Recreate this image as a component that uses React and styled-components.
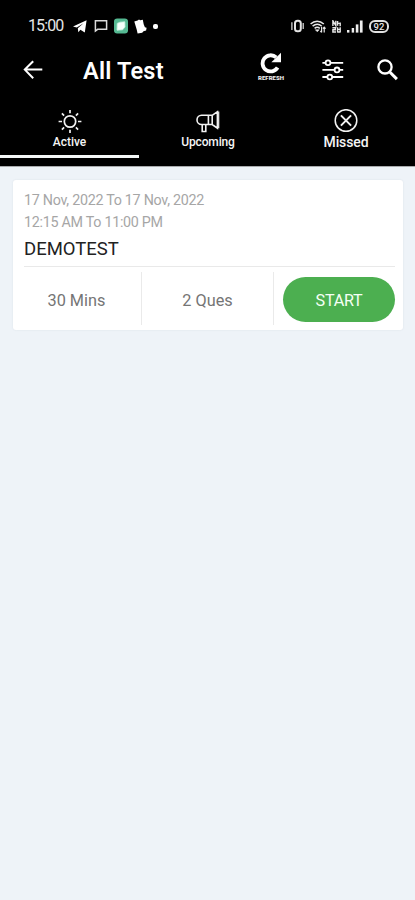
import React from 'react';
import styled, { createGlobalStyle } from 'styled-components';

const TABS = [
  { id: 'active', label: 'Active', size: 12, spacing: -0.05 },
  { id: 'upcoming', label: 'Upcoming', size: 12, spacing: -0.15 },
  { id: 'missed', label: 'Missed', size: 14, spacing: -0.1 },
];

const TelegramIcon = () => (
  <svg width="14" height="13" viewBox="0 0 14 13">
    <path d="M0 6.6 13.6.2 11.8 12.6 7.4 9.8 5.3 12.2 4.8 8.2 10.5 3.2 3.8 7.6Z" fill="#fff" />
  </svg>
);

const MessageIcon = () => (
  <svg width="14" height="14" viewBox="0 0 14 14" fill="none" stroke="#dcdcdc" strokeWidth="1.5">
    <path d="M1.4 12V1.8h11.2v8.5H3.6Z" />
  </svg>
);

const GreenAppIcon = () => (
  <svg width="14" height="16" viewBox="0 0 14 16">
    <rect y=".4" width="14" height="15" rx="3.2" fill="#55b992" />
    <path d="M3.2 5.4 6 4.2l4.8-.4.2 5.2-2.4 2.8-5.6.4Z" fill="#f4fffa" stroke="#c8f0e0" strokeWidth=".8" />
  </svg>
);

const CardsIcon = () => (
  <svg width="13" height="15" viewBox="0 0 13 15">
    <path d="M.3 2.4 3.6 1.6 5 .4l1.2.9L8.8.8l.9 4.4 1.2 3 1.7.6-.5 2.8-2.6.6-1.3 1.6-4.6.8-.9-4.2Z" fill="#fff" />
  </svg>
);

const VibrateIcon = () => (
  <svg width="13" height="14" viewBox="0 0 13 14" fill="none" stroke="#e4e4e4">
    <rect x="4" y="1.7" width="5.8" height="10.6" rx="2.6" strokeWidth="2" />
    <path d="M.9 3.2v7.8M12.2 4v6" strokeWidth="1.2" />
  </svg>
);

const WifiIcon = () => (
  <svg width="16" height="13" viewBox="0 0 16 13" fill="none" stroke="#e8e8e8" strokeWidth="1.5">
    <path d="M.6 4C4.5.4 9.8.4 13.8 4M2.6 6.2c2.9-2.4 6.4-2.4 9.2 0M4.6 8.4c1.6-1.4 3.6-1.4 5.2 0" />
    <path d="m5.4 9.8 1.9 2 1.9-2Z" fill="#e8e8e8" strokeWidth=".6" />
    <path d="M11.6 7v5.4M14.2 7v5.4M10.4 11l1.2 1.4M13 8.6l1.2-1.4 1.4 1.4" strokeWidth="1.2" />
  </svg>
);

const NetworkIcon = () => (
  <svg width="9" height="13" viewBox="0 0 9 13" fill="none" stroke="#e8e8e8" strokeWidth="1.4">
    <path d="M.9 6V.8l2.9 4.8V.8M5.6 1v4.8M5.6 3.4h2.6M8.2 2.6v3.6M.4 7.7h3v2H.9v2.3H4M5.6 7.2v5.2M8.2 7.2v5.2M5.4 9.4h3M5.4 12h2.8" />
  </svg>
);

const SignalIcon = () => (
  <svg width="16" height="13" viewBox="0 0 16 13" fill="#ededed">
    <rect y="10" width="2.4" height="2.6" />
    <rect x="4.7" y="8" width="2.4" height="4.6" />
    <rect x="8.8" y="4.4" width="2.6" height="8.2" />
    <rect x="12.9" y=".5" width="2.7" height="12.1" />
  </svg>
);

const BackIcon = () => (
  <svg width="20" height="20" viewBox="0 0 20 20" fill="none" stroke="#fff" strokeWidth="2">
    <path d="M19.3 9.6H2M10.2 1.2 1.8 9.6l8.4 8.6" />
  </svg>
);

const RefreshIcon = () => (
  <svg width="22" height="22" viewBox="0 0 22 22" fill="none">
    <path d="M17.6 15.6A8.1 8.1 0 1 1 16.2 5.4" stroke="#fff" strokeWidth="3.8" />
    <path d="M21 .8v9.4h-9.6Z" fill="#fff" />
  </svg>
);

const FilterIcon = () => (
  <svg width="22" height="22" viewBox="0 0 22 22" fill="none" stroke="#fff" strokeWidth="1.8">
    <path d="M.4 3.8h3.4M8.2 3.8h13M.4 10.9h12.4M17.2 10.9h4M.4 18h5.2M10 18h11.2" />
    <circle cx="6" cy="3.8" r="2.4" />
    <circle cx="15" cy="10.9" r="2.4" />
    <circle cx="7.8" cy="18" r="2.4" />
  </svg>
);

const SearchIcon = () => (
  <svg width="22" height="22" viewBox="0 0 22 22" fill="none" stroke="#fff">
    <circle cx="8" cy="7.9" r="6.6" strokeWidth="2.3" />
    <path d="m13 13.2 6.9 6.9" strokeWidth="3" />
  </svg>
);

const SunIcon = () => (
  <svg width="24" height="24" viewBox="0 0 24 24" fill="none" stroke="#f2f2f2" strokeWidth="1.7">
    <circle cx="12" cy="12.5" r="5.7" />
    <path d="M12 1v3.2M12 20.8V24M.6 12.5H4M20 12.5h3.4M3.9 4.4l2.2 2.2M17.9 18.4l2.2 2.2M3.9 20.6l2.2-2.2M17.9 6.6l2.2-2.2" />
  </svg>
);

const MegaphoneIcon = () => (
  <svg width="24" height="24" viewBox="0 0 24 24" fill="none" stroke="#f2f2f2" strokeWidth="1.6">
    <path d="M12.4 6.3H5.6a4.6 4.6 0 0 0 0 9.2h6.8ZM12.4 6.3h3.8v9.2h-3.8M16.2 6.3l5.2-3.6v16.4l-5.2-3.6M6.2 15.5v7h3.6v-7" />
    <path d="M22.7 2.6v16.6" strokeWidth="1.2" />
  </svg>
);

const MissedIcon = () => (
  <svg width="24" height="24" viewBox="0 0 24 24" fill="none" stroke="#f2f2f2">
    <circle cx="12" cy="11.5" r="10.8" strokeWidth="1.5" />
    <path d="m6.9 6.4 10.2 10.2M17.1 6.4 6.9 16.6" strokeWidth="2" />
  </svg>
);

const TAB_ICONS = { active: SunIcon, upcoming: MegaphoneIcon, missed: MissedIcon };

const App = () => {
  return (
    <Screen>
      <GlobalStyles />
      <Header>
        <StatusBar>
          <StatusGroup $gap={6.3}>
            <Clock>15:00</Clock>
            <TelegramIcon />
            <MessageIcon />
            <GreenAppIcon />
            <CardsIcon />
            <Dot />
          </StatusGroup>
          <StatusGroup $gap={6}>
            <VibrateIcon />
            <WifiIcon />
            <NetworkIcon />
            <SignalIcon />
            <Battery>92</Battery>
          </StatusGroup>
        </StatusBar>
        <Toolbar>
          <BackIcon />
          <Title>All Test</Title>
          <Actions>
            <Refresh>
              <RefreshIcon />
              <RefreshLabel>REFRESH</RefreshLabel>
            </Refresh>
            <FilterIcon />
            <SearchIcon />
          </Actions>
        </Toolbar>
        <Tabs>
          {TABS.map(({ id, label, size, spacing }) => {
            const Icon = TAB_ICONS[id];
            return (
              <Tab key={id} $active={id === 'active'}>
                <Icon />
                <TabLabel $size={size} $spacing={spacing}>
                  {label}
                </TabLabel>
              </Tab>
            );
          })}
        </Tabs>
      </Header>
      <Content>
        <Card>
          <Schedule $spacing={-0.28}>17 Nov, 2022 To 17 Nov, 2022</Schedule>
          <Schedule $spacing={-0.28}>12:15 AM To 11:00 PM</Schedule>
          <TestName>DEMOTEST</TestName>
          <Details>
            <Detail>30 Mins</Detail>
            <Detail>2 Ques</Detail>
            <StartButton>START</StartButton>
          </Details>
        </Card>
      </Content>
    </Screen>
  );
};

const GlobalStyles = createGlobalStyle`
  *, *::before, *::after {
    box-sizing: border-box;
  }

  body {
    margin: 0;
    background: #eef3f8;
    font-family: Roboto, "Liberation Sans", sans-serif;
  }

  svg {
    display: block;
    flex-shrink: 0;
  }
`;

const Screen = styled.div`
  width: 415px;
  height: 900px;
  overflow: hidden;
  background: #eef3f8;
`;

const Header = styled.header`
  height: 167px;
  background: #000;
  border-bottom: 1px solid #a9abad;
`;

const StatusBar = styled.div`
  display: flex;
  align-items: center;
  justify-content: space-between;
  height: 44px;
  padding: 8px 26px 0 28px;
`;

const StatusGroup = styled.div`
  display: flex;
  align-items: center;
  gap: ${(props) => props.$gap}px;
`;

const Clock = styled.span`
  width: 39px;
  color: #e6e6e6;
  font-size: 16px;
  letter-spacing: -0.9px;
  line-height: 18px;
`;

const Dot = styled.span`
  width: 5px;
  height: 5px;
  border-radius: 2px;
  background: #fff;
`;

const Battery = styled.span`
  width: 20px;
  height: 13px;
  border: 2px solid #e0e0e0;
  border-radius: 6px;
  color: #e6e6e6;
  font-size: 9.5px;
  font-weight: 500;
  line-height: 10px;
  text-align: center;
`;

const Toolbar = styled.div`
  display: flex;
  align-items: center;
  height: 52px;
  padding: 0 16px 0 23px;
`;

const Title = styled.h1`
  margin: 2px 0 0 40px;
  color: #fff;
  font-size: 23.5px;
  font-weight: 600;
  line-height: 28px;
  letter-spacing: 0.2px;
  white-space: nowrap;
`;

const Actions = styled.div`
  display: flex;
  align-items: center;
  gap: 33px;
  margin-left: auto;
`;

const Refresh = styled.div`
  display: flex;
  flex-direction: column;
  align-items: center;
  width: 28px;
  height: 32px;
  margin: -4px 4px 0 0;
`;

const RefreshLabel = styled.span`
  color: #eee;
  font-size: 6px;
  font-weight: 900;
  line-height: 7px;
`;

const Tabs = styled.nav`
  display: grid;
  grid-template-columns: 139px 138px 138px;
  height: 62px;
`;

const Tab = styled.div`
  display: flex;
  flex-direction: column;
  align-items: center;
  padding-top: 13px;
  border-bottom: 3px solid ${(props) => (props.$active ? '#f4f8f8' : 'transparent')};
`;

const TabLabel = styled.span`
  height: 16px;
  color: #f5f5f5;
  font-size: ${(props) => props.$size}px;
  font-weight: 500;
  letter-spacing: ${(props) => props.$spacing}px;
  line-height: 18px;
`;

const Content = styled.main`
  padding: 13px 12px 0 13px;
`;

const Card = styled.section`
  height: 150px;
  padding: 10px 8px 0 11px;
  border-radius: 3px;
  background: #fff;
  box-shadow: 0 0 2px rgba(90, 100, 110, 0.12);
`;

const Schedule = styled.p`
  margin: 0;
  color: #a6a6a6;
  font-size: 14.3px;
  letter-spacing: ${(props) => props.$spacing}px;
  line-height: 21.5px;
  white-space: nowrap;
`;

const TestName = styled.h2`
  height: 34px;
  margin: 0;
  padding-top: 4px;
  border-bottom: 1px solid #e9e9e9;
  color: #222;
  font-size: 18.5px;
  font-weight: 400;
  line-height: 24px;
`;

const Details = styled.div`
  display: grid;
  grid-template-columns: 118px 132px 1fr;
  align-items: center;
  padding-top: 5px;
`;

const Detail = styled.div`
  height: 53px;
  padding-right: 12px;
  border-right: 1px solid #eaeaea;
  color: #757575;
  font-size: 16.3px;
  line-height: 58px;
  text-align: center;

  & + & {
    padding-right: 0;
  }
`;

const StartButton = styled.button`
  height: 45px;
  margin: 2px 0 0 9px;
  padding: 2px 0 0;
  border: 0;
  border-radius: 23px;
  background: #4caf50;
  color: #f5fff5;
  font-family: inherit;
  font-size: 16.2px;
  letter-spacing: -0.25px;
`;

export default App;
